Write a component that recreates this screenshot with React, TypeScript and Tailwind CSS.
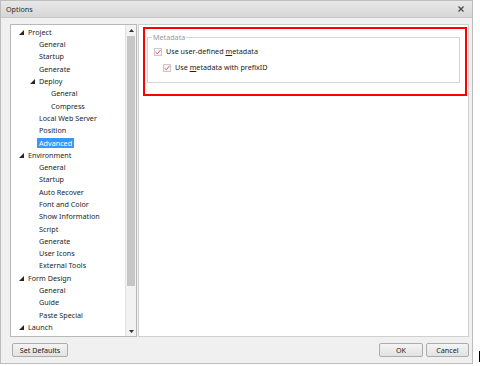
// Options dialog with a settings tree on the left and the Metadata panel on the right

type Node = { label: string; level: number; open?: boolean; selected?: boolean };

const tree: Node[] = [
    { label: "Project", level: 0, open: true },
    { label: "General", level: 1 },
    { label: "Startup", level: 1 },
    { label: "Generate", level: 1 },
    { label: "Deploy", level: 1, open: true },
    { label: "General", level: 2 },
    { label: "Compress", level: 2 },
    { label: "Local Web Server", level: 1 },
    { label: "Position", level: 1 },
    { label: "Advanced", level: 1, selected: true },
    { label: "Environment", level: 0, open: true },
    { label: "General", level: 1 },
    { label: "Startup", level: 1 },
    { label: "Auto Recover", level: 1 },
    { label: "Font and Color", level: 1 },
    { label: "Show Information", level: 1 },
    { label: "Script", level: 1 },
    { label: "Generate", level: 1 },
    { label: "User Icons", level: 1 },
    { label: "External Tools", level: 1 },
    { label: "Form Design", level: 0, open: true },
    { label: "General", level: 1 },
    { label: "Guide", level: 1 },
    { label: "Paste Special", level: 1 },
    { label: "Launch", level: 0, open: true },
];

const Expanded = () => (
    <svg width="5" height="5" viewBox="0 0 5 5" className="shrink-0">
        <polygon points="5,0 5,5 0,5" fill="#262626" />
    </svg>
);

const TreeRow = ({ node }: { node: Node }) => {
    const indent = node.level === 0 ? "pl-[8px]" : node.level === 1 ? "pl-[19px]" : "pl-[31px]";
    return (
        <div className={`h-[12.3px] flex items-center ${indent}`}>
            {/* expander glyph, or an empty slot of the same width */}
            <div className="w-[9px] flex items-center">{node.open && <Expanded />}</div>
            <span
                className={
                    node.selected
                        ? "bg-[#3399ff] text-white px-[2px] -ml-[2px] leading-[10px] h-[10px]"
                        : "text-[#1e1e1e] whitespace-nowrap"
                }
            >
                {node.label}
            </span>
        </div>
    );
};

const Check = ({ label }: { label: [string, string, string] }) => (
    <div className="flex items-center gap-[4px] h-[8px]">
        <div className="w-[8px] h-[8px] border border-[#c8c8c8] bg-[#f6f6f6] flex items-center justify-center">
            <svg width="6" height="6" viewBox="0 0 6 6">
                <path d="M0.6 3.2 L2.3 4.8 L5.6 0.8" stroke="#e04848" strokeWidth="0.9" fill="none" />
            </svg>
        </div>
        <span className="text-[#222] whitespace-nowrap">
            {label[0]}
            <span className="underline">{label[1]}</span>
            {label[2]}
        </span>
    </div>
);

const Button = ({ children, w }: { children: string; w: string }) => (
    <button
        className={`${w} h-[14px] rounded-[2px] border border-[#adadad] bg-gradient-to-b from-[#f4f4f4] to-[#e2e2e2] text-[#222] flex items-center justify-center`}
    >
        {children}
    </button>
);

export default function App() {
    return (
        <div
            className="w-[480px] h-[366px] bg-white relative text-[7.2px]"
            style={{ fontFamily: '"Segoe UI", "Noto Sans", sans-serif' }}
        >
            {/* dialog window */}
            <div className="w-[473px] h-[364px] border border-[#bdbdbd] bg-[#f0f0f0] flex flex-col">
                {/* title bar */}
                <div className="h-[17px] shrink-0 flex items-center justify-between pl-[5px] pr-[8px] bg-gradient-to-b from-[#e8e8e8] to-[#d6d6d6] border-b border-[#c6c6c6]">
                    <span className="text-[#2b2b2b]">Options</span>
                    <svg width="6" height="6" viewBox="0 0 6 6">
                        <path d="M0.5 0.5 L5.5 5.5 M5.5 0.5 L0.5 5.5" stroke="#4a4a4a" strokeWidth="1.3" />
                    </svg>
                </div>

                {/* body */}
                <div className="flex-1 flex flex-col pl-[9px] pr-[3px] pt-[6px]">
                    <div className="h-[313px] flex gap-[1px]">
                        {/* tree */}
                        <div className="w-[127px] border border-[#b8b8b8] bg-white flex">
                            <div className="flex-1 pt-[1px] overflow-hidden">
                                {tree.map((n, i) => (
                                    <TreeRow key={i} node={n} />
                                ))}
                            </div>
                            {/* scrollbar */}
                            <div className="w-[11px] border-l border-[#e2e2e2] bg-[#f2f2f2] flex flex-col items-center">
                                <div className="h-[10px] flex items-center justify-center">
                                    <svg width="5" height="3" viewBox="0 0 5 3">
                                        <polygon points="2.5,0 5,3 0,3" fill="#333" />
                                    </svg>
                                </div>
                                <div className="w-[8px] h-[250px] bg-[#c6c6c6] mt-[1px]" />
                                <div className="flex-1" />
                                <div className="h-[10px] flex items-center justify-center">
                                    <svg width="5" height="3" viewBox="0 0 5 3">
                                        <polygon points="0,0 5,0 2.5,3" fill="#333" />
                                    </svg>
                                </div>
                            </div>
                        </div>

                        {/* settings panel */}
                        <div className="w-[331px] border border-[#d0d0d0] bg-white">
                            <div className="mt-[2px] ml-[4px] mr-[1px] h-[69px] border-2 border-[#ff0000] pl-[2px] pr-[5px]">
                                <fieldset className="border border-[#d4d4d4] h-[51px] mt-[3px] pl-[6px]">
                                    <legend className="px-[1px] -ml-[2px] text-[#9a9a9a]">Metadata</legend>
                                    <div className="flex flex-col gap-[8px] pt-[5px]">
                                        <Check label={["Use user-defined ", "m", "etadata"]} />
                                        <div className="pl-[9px]">
                                            <Check label={["Use ", "m", "etadata with prefixID"]} />
                                        </div>
                                    </div>
                                </fieldset>
                            </div>
                        </div>
                    </div>

                    {/* footer buttons */}
                    <div className="flex items-center justify-between pt-[6px] pl-[2px]">
                        <Button w="w-[56px]">Set Defaults</Button>
                        <div className="flex gap-[3px]">
                            <Button w="w-[44px]">OK</Button>
                            <Button w="w-[43px]">Cancel</Button>
                        </div>
                    </div>
                </div>
            </div>
            {/* stray dark edge at bottom right of the capture */}
            <div className="absolute right-0 top-[351px] w-[1px] h-[11px] bg-black" />
        </div>
    );
}
